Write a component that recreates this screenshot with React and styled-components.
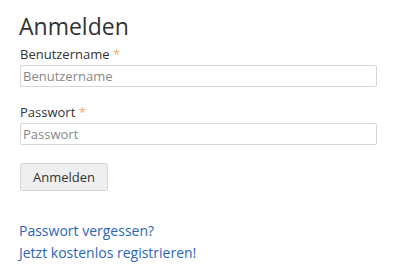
import styled, { createGlobalStyle } from "styled-components";

const GlobalStyle = createGlobalStyle`
  html, body {
    margin: 0;
    padding: 0;
    background: #fff;
  }
  body {
    font-family: "Open Sans", "DejaVu Sans", sans-serif;
    color: #333;
  }
`;

const Wrapper = styled.div`
  width: 406px;
  height: 280px;
  box-sizing: border-box;
  padding: 12px 20px 0 20px;
`;

const Title = styled.h2`
  margin: 0 0 0 -1px;
  font-size: 23px;
  font-weight: 400;
  line-height: 28px;
  color: #333;
`;

const Form = styled.form`
  display: flex;
  flex-direction: column;
  margin-top: 5px;
`;

const Field = styled.div`
  display: flex;
  flex-direction: column;
  margin-bottom: ${(p) => p.$gap || 16}px;
`;

const Label = styled.label`
  font-size: 13px;
  font-weight: 400;
  line-height: 18px;
  color: #333;
  margin-bottom: 2px;

  span {
    color: #f0a868;
  }
`;

const Input = styled.input`
  box-sizing: border-box;
  width: 357px;
  height: 22px;
  padding: 0 2px;
  border: 1px solid #d6d6d6;
  border-radius: 2px;
  font-family: inherit;
  font-size: 13px;
  color: #333;
  outline: none;

  &::placeholder {
    color: #888;
  }
`;

const Button = styled.button`
  box-sizing: border-box;
  align-self: flex-start;
  width: 88px;
  height: 28px;
  border: 1px solid #d4d4d4;
  border-radius: 3px;
  background: #efefef;
  font-family: inherit;
  font-size: 13px;
  color: #333;
  cursor: pointer;
`;

const Links = styled.div`
  display: flex;
  flex-direction: column;
  margin-top: 29px;
  margin-left: -1px;

  a {
    font-size: 14px;
    line-height: 22px;
    color: #2a66b8;
    text-decoration: none;
  }
`;

export default function App() {
  return (
    <>
      <GlobalStyle />
      <Wrapper>
        <Title>Anmelden</Title>
        <Form onSubmit={(e) => e.preventDefault()}>
          <Field>
            <Label>
              Benutzername <span>*</span>
            </Label>
            <Input placeholder="Benutzername" />
          </Field>
          <Field $gap={18}>
            <Label>
              Passwort <span>*</span>
            </Label>
            <Input type="password" placeholder="Passwort" />
          </Field>
          <Button type="submit">Anmelden</Button>
        </Form>
        <Links>
          <a href="#">Passwort vergessen?</a>
          <a href="#">Jetzt kostenlos registrieren!</a>
        </Links>
      </Wrapper>
    </>
  );
}
